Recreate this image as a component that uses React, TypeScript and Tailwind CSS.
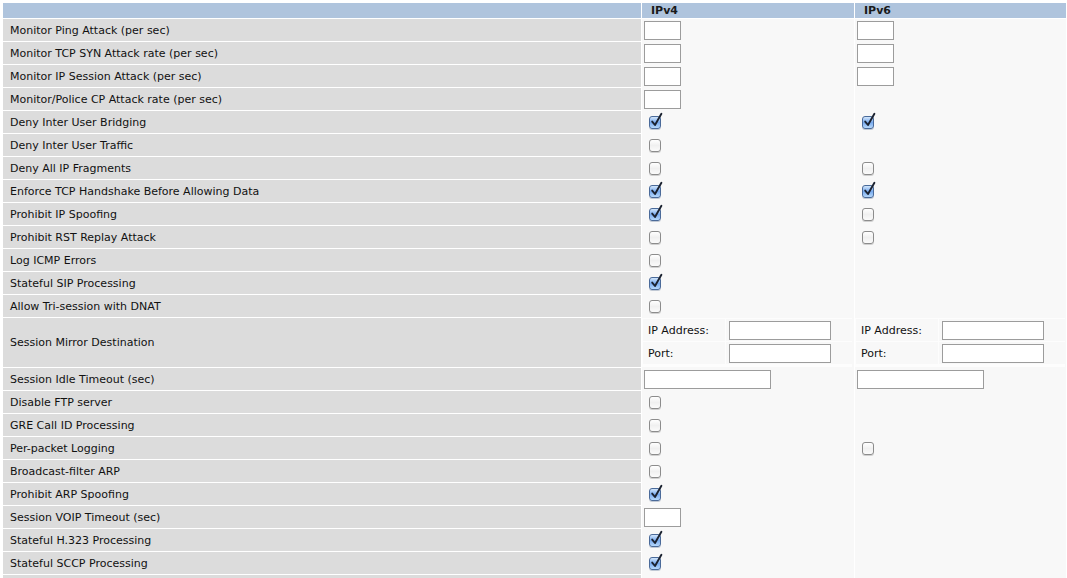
import React from "react"

type Cell = "input" | "wide" | "on" | "off" | "mirror" | null

interface Row {
  label: string
  v4: Cell
  v6: Cell
}

const rows: Row[] = [
  { label: "Monitor Ping Attack (per sec)", v4: "input", v6: "input" },
  { label: "Monitor TCP SYN Attack rate (per sec)", v4: "input", v6: "input" },
  { label: "Monitor IP Session Attack (per sec)", v4: "input", v6: "input" },
  { label: "Monitor/Police CP Attack rate (per sec)", v4: "input", v6: null },
  { label: "Deny Inter User Bridging", v4: "on", v6: "on" },
  { label: "Deny Inter User Traffic", v4: "off", v6: null },
  { label: "Deny All IP Fragments", v4: "off", v6: "off" },
  { label: "Enforce TCP Handshake Before Allowing Data", v4: "on", v6: "on" },
  { label: "Prohibit IP Spoofing", v4: "on", v6: "off" },
  { label: "Prohibit RST Replay Attack", v4: "off", v6: "off" },
  { label: "Log ICMP Errors", v4: "off", v6: null },
  { label: "Stateful SIP Processing", v4: "on", v6: null },
  { label: "Allow Tri-session with DNAT", v4: "off", v6: null },
  { label: "Session Mirror Destination", v4: "mirror", v6: "mirror" },
  { label: "Session Idle Timeout (sec)", v4: "wide", v6: "wide" },
  { label: "Disable FTP server", v4: "off", v6: null },
  { label: "GRE Call ID Processing", v4: "off", v6: null },
  { label: "Per-packet Logging", v4: "off", v6: "off" },
  { label: "Broadcast-filter ARP", v4: "off", v6: null },
  { label: "Prohibit ARP Spoofing", v4: "on", v6: null },
  { label: "Session VOIP Timeout (sec)", v4: "input", v6: null },
  { label: "Stateful H.323 Processing", v4: "on", v6: null },
  { label: "Stateful SCCP Processing", v4: "on", v6: null },
  { label: "", v4: null, v6: null },
]

function Checkbox({ checked }: { checked: boolean }) {
  if (!checked) {
    return (
      <span className="ml-[7px] block h-[13px] w-[12px] rounded-[3px] border border-[#8c8c8c] bg-gradient-to-b from-[#ffffff] via-[#f0f0f0] to-[#fbfbfb] shadow-[0_1px_0_#d0d0d0]" />
    )
  }
  return (
    <span className="relative ml-[7px] block h-[13px] w-[12px] rounded-[3px] border border-[#4a6a99] bg-gradient-to-b from-[#d2e6fb] via-[#78aaee] to-[#b6d8fb] shadow-[0_1px_0_#c0c8d4]">
      <svg className="absolute -top-[4px] left-[0px] h-[15px] w-[13px] overflow-visible" viewBox="0 0 13 15">
        <path d="M2.2 8.6 L5 12 L11.4 0.8" fill="none" stroke="#1b2230" strokeWidth={1.9} strokeLinecap="round" strokeLinejoin="round" />
      </svg>
    </span>
  )
}

function TextBox({ width }: { width: string }) {
  return <input type="text" className={`ml-[2px] h-[19px] ${width} border border-[#9c9c9c] bg-white outline-none`} />
}

function Mirror() {
  return (
    <div className="grid h-full grid-cols-[82px_126px] grid-rows-[22px_22px] gap-px bg-[#fdfdfd] pl-px pt-px">
      <div className="flex items-center bg-[#f8f8f8] pl-[5px] pt-[2px]">IP Address:</div>
      <div className="flex items-center bg-[#f8f8f8] pl-[3px]">
        <input type="text" className="h-[19px] w-[102px] border border-[#9c9c9c] bg-white outline-none" />
      </div>
      <div className="flex items-center bg-[#f8f8f8] pl-[5px] pt-[2px]">Port:</div>
      <div className="flex items-center bg-[#f8f8f8] pl-[3px]">
        <input type="text" className="h-[19px] w-[102px] border border-[#9c9c9c] bg-white outline-none" />
      </div>
    </div>
  )
}

function Value({ cell }: { cell: Cell }) {
  if (cell === "input") return <TextBox width="w-[37px]" />
  if (cell === "wide") return <TextBox width="w-[127px]" />
  if (cell === "on") return <Checkbox checked />
  if (cell === "off") return <Checkbox checked={false} />
  if (cell === "mirror") return <Mirror />
  return null
}

export default function App() {
  return (
    <div
      className="min-h-[578px] bg-white pl-[3px] pt-[3px] text-[11px] text-[#111]"
      style={{ fontFamily: '"DejaVu Sans", Verdana, sans-serif' }}
    >
      <div className="grid grid-cols-[638px_212px_211px] gap-px">
        {/* header */}
        <div className="h-[15px] bg-[#afc4dd]" />
        <div className="flex h-[15px] items-center bg-[#afc4dd] pl-[9px] pt-px font-bold text-[#1a1a1a]">IPv4</div>
        <div className="flex h-[15px] items-center bg-[#afc4dd] pl-[9px] pt-px font-bold text-[#1a1a1a]">IPv6</div>

        {rows.map((r, i) => {
          const h = r.v4 === "mirror" ? "h-[49px]" : "h-[22px]"
          return (
            <React.Fragment key={i}>
              <div className={`flex ${h} items-center bg-[#dcdcdc] pl-[7px] pt-[2px]`}>{r.label}</div>
              <div className={`flex ${h} items-center bg-[#f8f8f8] shadow-[0_1px_0_#f8f8f8]`}>
                <Value cell={r.v4} />
              </div>
              <div className={`flex ${h} items-center bg-[#f8f8f8] shadow-[0_1px_0_#f8f8f8]`}>
                <Value cell={r.v6} />
              </div>
            </React.Fragment>
          )
        })}
      </div>
    </div>
  )
}
